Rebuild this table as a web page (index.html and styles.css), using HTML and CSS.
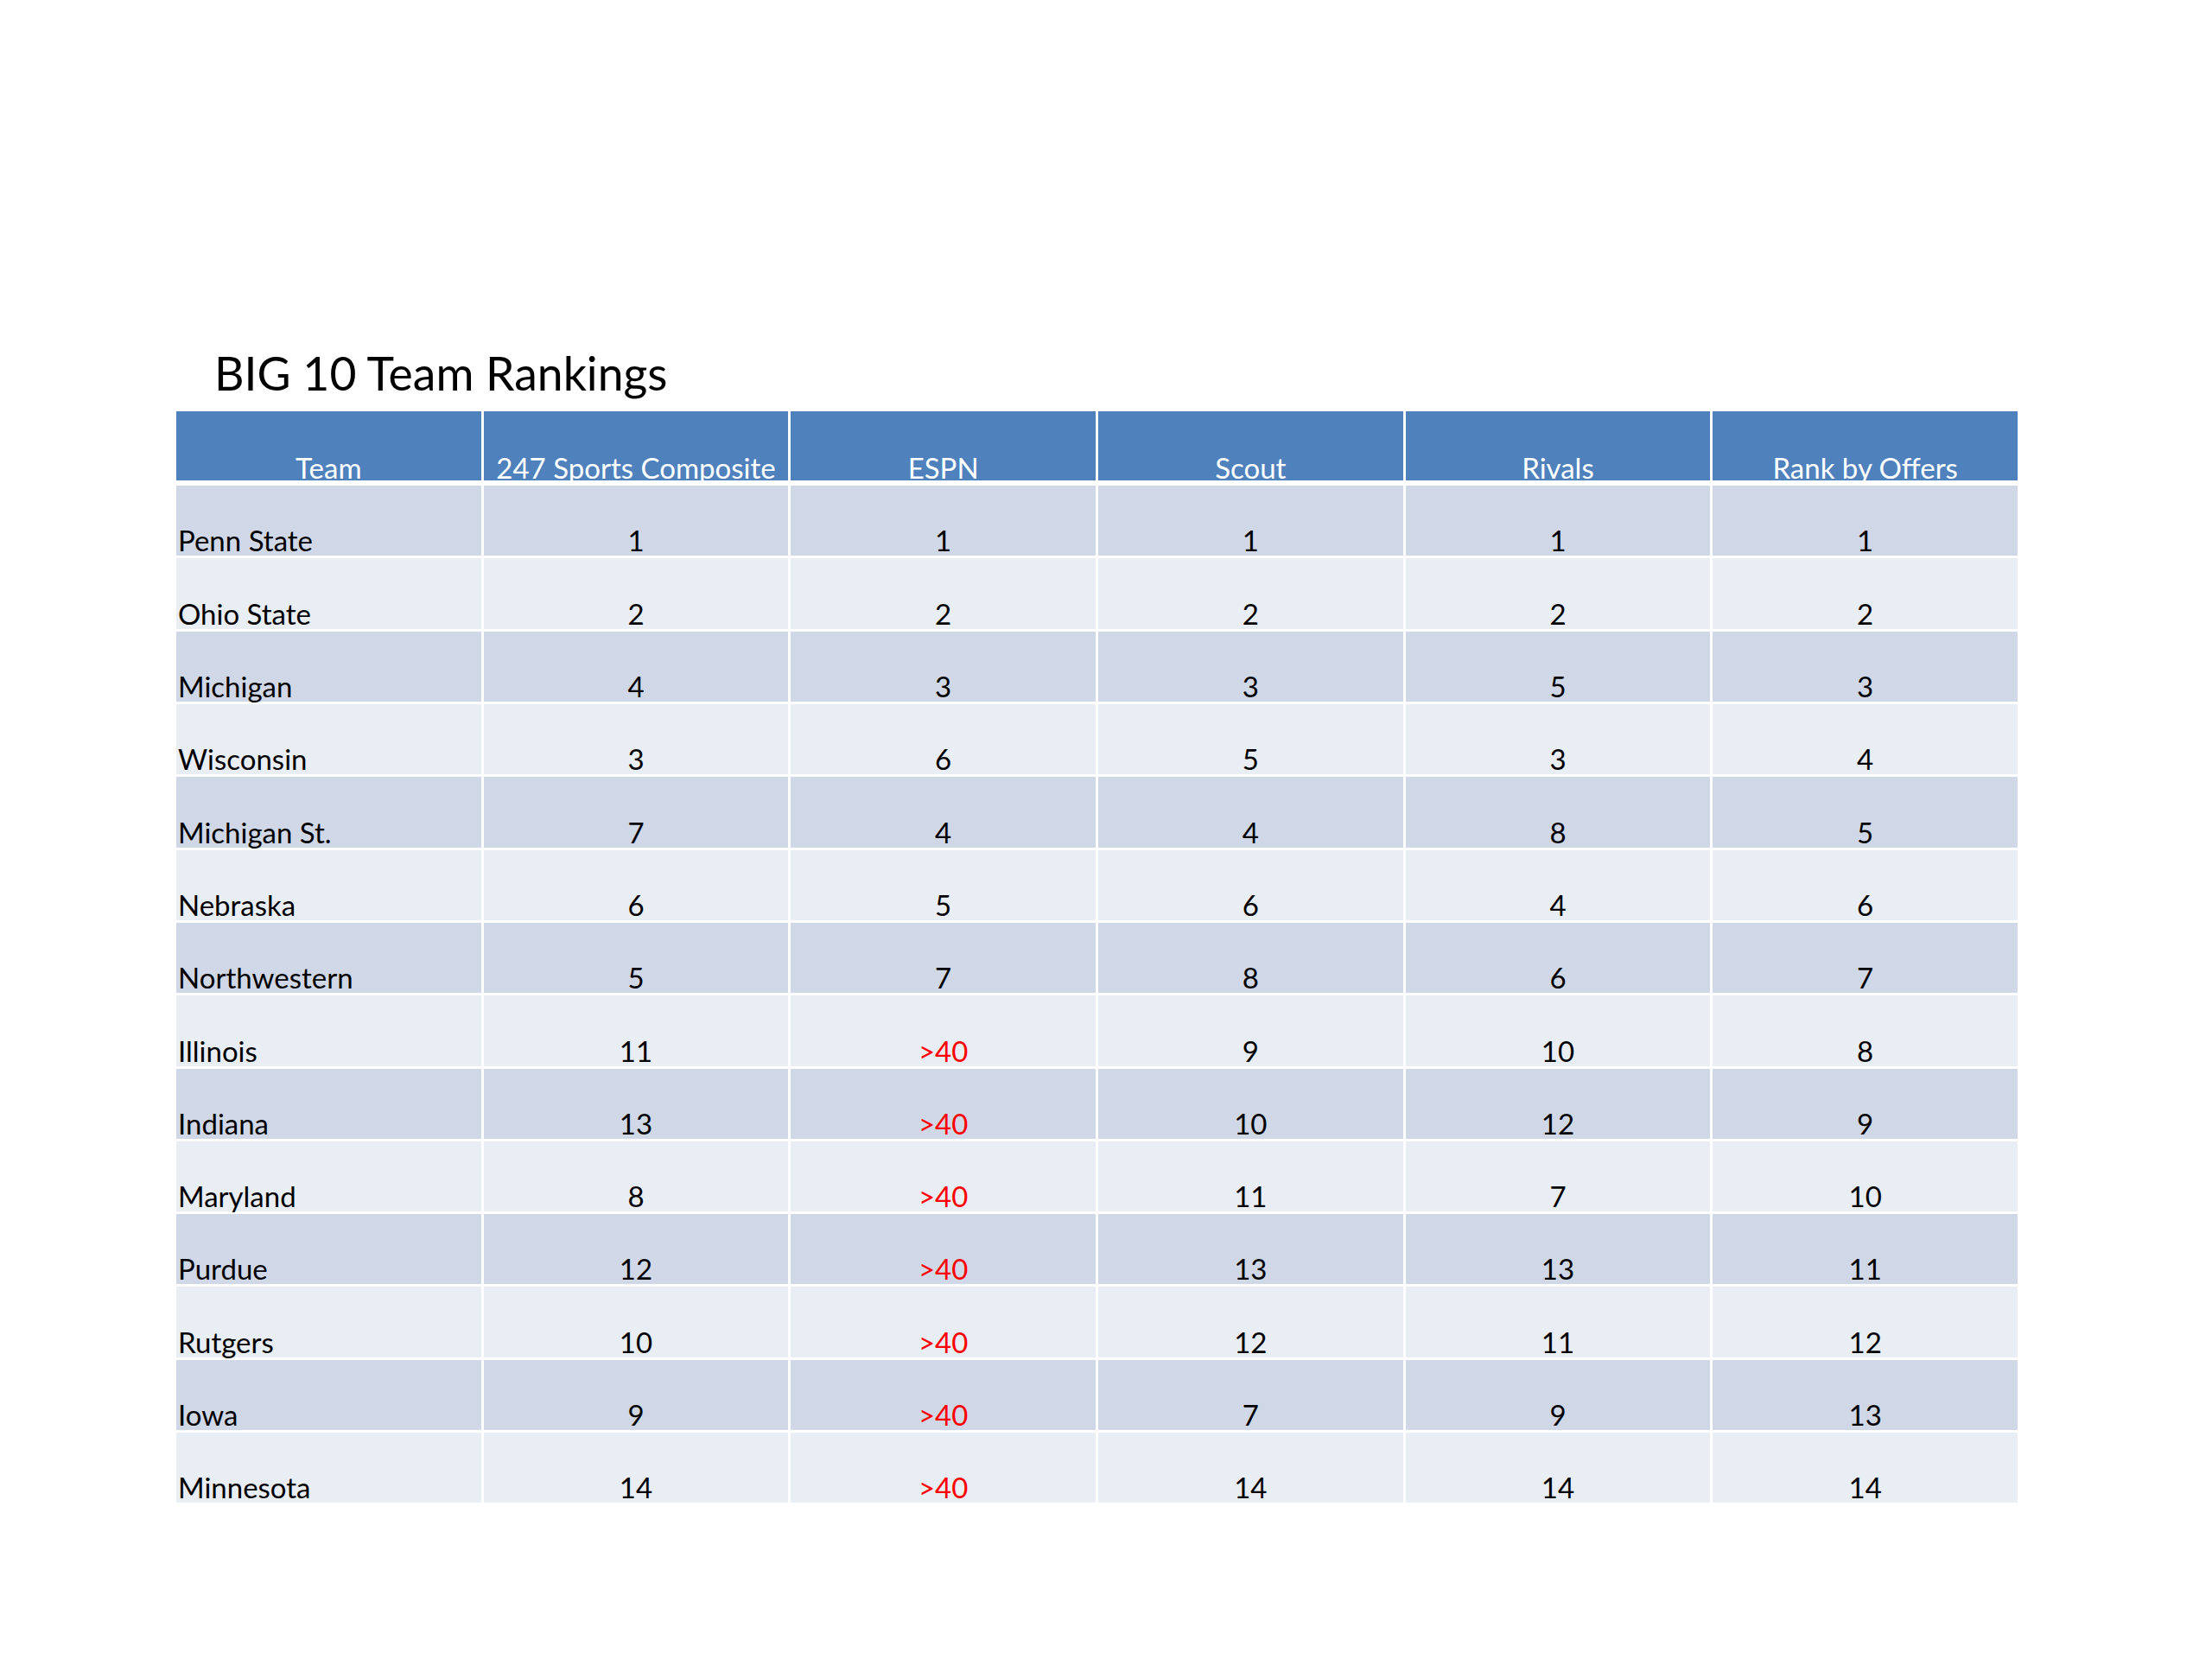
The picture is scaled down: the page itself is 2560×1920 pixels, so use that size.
FILE: index.html
```html
<!DOCTYPE html>
<html lang="en">
<head>
<meta charset="utf-8">
<title>BIG 10 Team Rankings</title>
<link rel="stylesheet" href="styles.css">
</head>
<body>
<main class="slide">
  <h1 class="title">BIG 10 Team Rankings</h1>
  <table class="rankings">
    <thead>
      <tr>
        <th class="team">Team</th>
        <th>247 Sports Composite</th>
        <th>ESPN</th>
        <th>Scout</th>
        <th>Rivals</th>
        <th>Rank by Offers</th>
      </tr>
    </thead>
    <tbody>
      <tr class="odd"><td class="team">Penn State</td><td>1</td><td>1</td><td>1</td><td>1</td><td>1</td></tr>
      <tr class="even"><td class="team">Ohio State</td><td>2</td><td>2</td><td>2</td><td>2</td><td>2</td></tr>
      <tr class="odd"><td class="team">Michigan</td><td>4</td><td>3</td><td>3</td><td>5</td><td>3</td></tr>
      <tr class="even"><td class="team">Wisconsin</td><td>3</td><td>6</td><td>5</td><td>3</td><td>4</td></tr>
      <tr class="odd"><td class="team">Michigan St.</td><td>7</td><td>4</td><td>4</td><td>8</td><td>5</td></tr>
      <tr class="even"><td class="team">Nebraska</td><td>6</td><td>5</td><td>6</td><td>4</td><td>6</td></tr>
      <tr class="odd"><td class="team">Northwestern</td><td>5</td><td>7</td><td>8</td><td>6</td><td>7</td></tr>
      <tr class="even"><td class="team">Illinois</td><td>11</td><td class="na">&gt;40</td><td>9</td><td>10</td><td>8</td></tr>
      <tr class="odd"><td class="team">Indiana</td><td>13</td><td class="na">&gt;40</td><td>10</td><td>12</td><td>9</td></tr>
      <tr class="even"><td class="team">Maryland</td><td>8</td><td class="na">&gt;40</td><td>11</td><td>7</td><td>10</td></tr>
      <tr class="odd"><td class="team">Purdue</td><td>12</td><td class="na">&gt;40</td><td>13</td><td>13</td><td>11</td></tr>
      <tr class="even"><td class="team">Rutgers</td><td>10</td><td class="na">&gt;40</td><td>12</td><td>11</td><td>12</td></tr>
      <tr class="odd"><td class="team">Iowa</td><td>9</td><td class="na">&gt;40</td><td>7</td><td>9</td><td>13</td></tr>
      <tr class="even"><td class="team">Minnesota</td><td>14</td><td class="na">&gt;40</td><td>14</td><td>14</td><td>14</td></tr>
    </tbody>
  </table>
</main>
</body>
</html>
```

FILE: styles.css
```css
html, body {
  margin: 0;
  padding: 0;
  background: #ffffff;
}

.slide {
  padding: 399px 0 0 201px;
  font-family: Lato, "Liberation Sans", sans-serif;
  color: #000000;
}

.title {
  margin: 0 0 10px 47px;
  font-size: 53.5px;
  font-weight: 400;
  line-height: 1.2;
}

.rankings {
  width: 2137px;
  table-layout: fixed;
  border-collapse: separate;
  border-spacing: 3px;
  font-size: 33px;
  line-height: 1;
}

.rankings th,
.rankings td {
  padding: 0 0 1px 0;
  text-align: center;
  vertical-align: bottom;
  font-weight: 400;
}

.rankings th {
  height: 80px;
  padding-bottom: 0;
  line-height: 0.9;
  background: #4f81bd;
  color: #ffffff;
  border-bottom: 3px solid #ffffff;
}

.rankings td {
  height: 80.3px;
}

.rankings .odd td {
  background: #d0d8e8;
}

.rankings .even td {
  background: #e9edf4;
}

.rankings td.team {
  text-align: left;
  padding-left: 2px;
}

.rankings td.na {
  color: #ff0000;
}
```
